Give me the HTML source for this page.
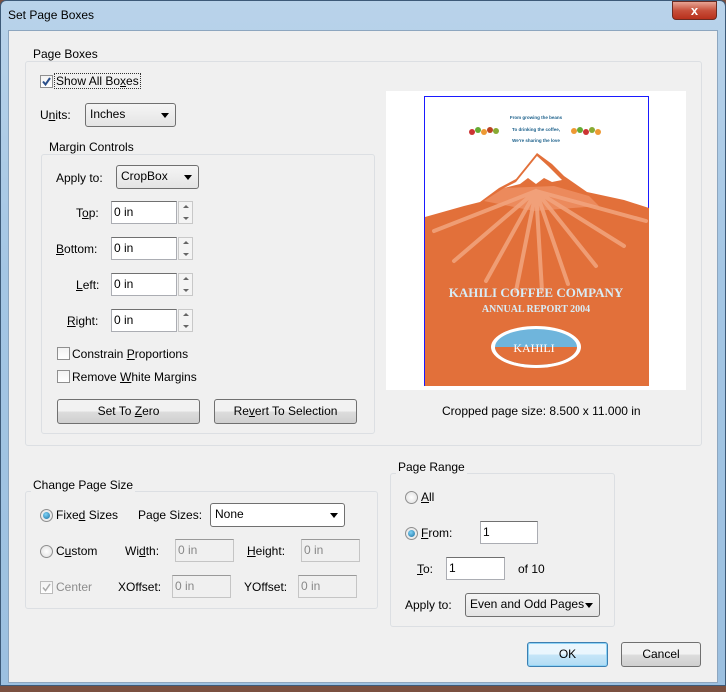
<!DOCTYPE html>
<html><head><style>
*{box-sizing:border-box}
body{margin:0;width:726px;height:692px;overflow:hidden;font-family:"Liberation Sans",sans-serif;font-size:12px;color:#000;background:#7a5040;position:relative}
.a{position:absolute}
#frame{left:0;top:0;width:726px;height:686px;background:linear-gradient(#b9d3ea,#a4c6e4 40%,#9cc0e0);border:1px solid #3d5a78;border-radius:6px 6px 0 0}
#inner{left:8px;top:30px;width:710px;height:653px;background:#f0f0f0;border:1px solid #8da6bf}
.grp{position:absolute;border:1px solid #dcdfe3;border-radius:3px}
.lbl{position:absolute;background:#f0f0f0;padding:0 2px;line-height:14px}
.t{position:absolute;line-height:14px;white-space:nowrap}
.sel{position:absolute;border:1px solid #707070;border-radius:3px;background:linear-gradient(#f5f5f5,#e4e4e4);padding:3px 4px;line-height:15px}
.sel:after{content:"";position:absolute;right:6px;top:9px;border:4px solid transparent;border-top:5px solid #000;border-bottom:0}
.sel.w{background:#fff}
.inp{position:absolute;border:1px solid #abadb3;border-top-color:#707070;background:#fff;padding:2px 2px;line-height:16px}
.inp.d{background:#f0f0f0;color:#888;border-color:#c5c5c5;border-top-color:#999}
.spin{position:absolute;width:15px;height:23px;border:1px solid #c8c8c8;background:#f4f4f4}
.spin:before,.spin:after{content:"";position:absolute;left:4px;border:3px solid transparent}
.spin:before{top:3px;border-bottom:3px solid #666;border-top:0}
.spin:after{bottom:3px;border-top:3px solid #666;border-bottom:0}
.cb{position:absolute;width:13px;height:13px;border:1px solid #8f8f8f;background:linear-gradient(#f2f2f2,#fff)}
.rd{position:absolute;width:13px;height:13px;border:1px solid #8f8f8f;border-radius:50%;background:radial-gradient(#fff,#ddd)}
.rd.on:after{content:"";position:absolute;left:2px;top:2px;width:7px;height:7px;border-radius:50%;background:radial-gradient(circle at 40% 35%,#7fd3f7,#1a6fa0)}
.btn{position:absolute;border:1px solid #707070;border-radius:3px;background:linear-gradient(#f2f2f2 50%,#dddddd 50%,#cfcfcf);text-align:center;line-height:22px}
u{text-decoration:underline}
</style></head><body>
<div id="frame" class="a"></div>
<div class="t" style="left:8px;top:8px;font-size:12px">Set Page Boxes</div>
<div class="a" style="left:672px;top:1px;width:45px;height:19px;border:1px solid #6b2b22;border-radius:0 0 4px 4px;background:linear-gradient(#e8a494,#c7503b 50%,#b8301c);color:#fff;text-align:center;font-weight:bold;font-size:13px;line-height:17px">x</div>
<div id="inner" class="a"></div>

<div class="grp" style="left:25px;top:61px;width:677px;height:385px"></div>
<div class="lbl" style="left:31px;top:47px">Page Boxes</div>
<div class="cb" style="left:40px;top:75px"><svg width="11" height="11" style="position:absolute;left:0;top:0"><path d="M2 5.5 L4.5 8.5 L9 2" stroke="#2a4f8a" stroke-width="2" fill="none"/></svg></div>
<div class="t" style="left:55px;top:74px;outline:1px dotted #333;padding:0 1px">Show All Bo<u>x</u>es</div>
<div class="t" style="left:40px;top:108px">U<u>n</u>its:</div>
<div class="sel" style="left:85px;top:103px;width:91px;height:24px">Inches</div>

<div class="grp" style="left:41px;top:154px;width:334px;height:280px"></div>
<div class="lbl" style="left:47px;top:140px">Margin Controls</div>
<div class="t" style="left:56px;top:171px">Apply to:</div>
<div class="sel" style="left:116px;top:165px;width:83px;height:24px">CropBox</div>
<div class="t" style="left:76px;top:206px">T<u>o</u>p:</div>
<div class="inp" style="left:111px;top:201px;width:66px;height:23px">0 in</div><div class="spin" style="left:178px;top:201px"></div>
<div class="t" style="left:56px;top:242px"><u>B</u>ottom:</div>
<div class="inp" style="left:111px;top:237px;width:66px;height:23px">0 in</div><div class="spin" style="left:178px;top:237px"></div>
<div class="t" style="left:76px;top:278px"><u>L</u>eft:</div>
<div class="inp" style="left:111px;top:273px;width:66px;height:23px">0 in</div><div class="spin" style="left:178px;top:273px"></div>
<div class="t" style="left:67px;top:314px"><u>R</u>ight:</div>
<div class="inp" style="left:111px;top:309px;width:66px;height:23px">0 in</div><div class="spin" style="left:178px;top:309px"></div>
<div class="cb" style="left:57px;top:347px"></div><div class="t" style="left:72px;top:347px">Constrain <u>P</u>roportions</div>
<div class="cb" style="left:57px;top:370px"></div><div class="t" style="left:72px;top:370px">Remove <u>W</u>hite Margins</div>
<div class="btn" style="left:57px;top:399px;width:143px;height:25px">Set To <u>Z</u>ero</div>
<div class="btn" style="left:214px;top:399px;width:143px;height:25px">Re<u>v</u>ert To Selection</div>

<div class="a" style="left:386px;top:91px;width:300px;height:299px;background:#fff"></div>
<svg class="a" style="left:424px;top:96px" width="226" height="291" viewBox="0 0 226 291">
<rect x="0.5" y="0.5" width="224" height="289" fill="#fff" stroke="#1a1aff"/>
<path d="M1 121 L40 110 L56 106 L75 92 L92 83 L113 57 L128 68 L140 80 L163 96 L200 104 L225 112 L225 290 L1 290 Z" fill="#e2703a"/>
<path d="M80 92 L92 86 L113 60 L124 70 L138 84 L128 86 L120 82 L112 88 L104 82 L96 88 Z" fill="#fff"/>
<path d="M60 105 L80 92 L130 90 L165 100 L175 110 L110 115 Z" fill="#ec8a5c"/>
<g stroke="#f2a57f" stroke-width="4" opacity=".85" stroke-linecap="round">
<path d="M112 95 L10 135 M112 95 L30 165 M112 95 L62 185 M112 95 L92 195 M112 95 L118 195 M112 95 L144 188 M112 95 L172 170 M112 95 L200 150 M112 95 L222 125"/>
</g>
<text x="112" y="23" font-size="4.5" fill="#1a5f8a" text-anchor="middle" font-weight="bold">From growing the beans</text>
<text x="112" y="35" font-size="4.5" fill="#1a5f8a" text-anchor="middle" font-weight="bold">To drinking the coffee,</text>
<text x="112" y="46" font-size="4.5" fill="#1a5f8a" text-anchor="middle" font-weight="bold">We're sharing the love</text>
<g><circle cx="48" cy="36" r="3" fill="#c33"/><circle cx="54" cy="34" r="3" fill="#6a3"/><circle cx="60" cy="36" r="3" fill="#e93"/><circle cx="66" cy="34" r="3" fill="#b42"/><circle cx="72" cy="35" r="3" fill="#8a3"/>
<circle cx="150" cy="35" r="3" fill="#e93"/><circle cx="156" cy="34" r="3" fill="#6a3"/><circle cx="162" cy="36" r="3" fill="#c33"/><circle cx="168" cy="34" r="3" fill="#8a3"/><circle cx="174" cy="36" r="3" fill="#e93"/></g>
<text x="112" y="201" font-size="13" fill="#d8ecf6" text-anchor="middle" font-family="Liberation Serif" font-weight="bold">KAHILI COFFEE COMPANY</text>
<text x="112" y="216" font-size="10" fill="#d8ecf6" text-anchor="middle" font-family="Liberation Serif" font-weight="bold">ANNUAL REPORT 2004</text>
<ellipse cx="112" cy="251" rx="45" ry="21" fill="#fff"/><ellipse cx="112" cy="251" rx="41" ry="18" fill="#6fb5dc"/>
<path d="M71 251 L153 251 A41 18 0 0 1 71 251Z" fill="#e2703a"/>
<text x="110" y="256" font-size="12" fill="#fff" text-anchor="middle" font-family="Liberation Serif">KAHILI</text>
</svg>
<div class="t" style="left:442px;top:404px">Cropped page size: 8.500 x 11.000 in</div>

<div class="grp" style="left:25px;top:491px;width:353px;height:118px"></div>
<div class="lbl" style="left:31px;top:478px">Change Page Size</div>
<div class="rd on" style="left:40px;top:509px"></div><div class="t" style="left:56px;top:508px">Fixe<u>d</u> Sizes</div>
<div class="t" style="left:138px;top:508px">Pa<u>g</u>e Sizes:</div>
<div class="sel w" style="left:210px;top:503px;width:135px;height:24px">None</div>
<div class="rd" style="left:40px;top:545px"></div><div class="t" style="left:56px;top:544px">C<u>u</u>stom</div>
<div class="t" style="left:125px;top:544px">Wi<u>d</u>th:</div>
<div class="inp d" style="left:175px;top:539px;width:59px;height:23px">0 in</div>
<div class="t" style="left:247px;top:544px"><u>H</u>eight:</div>
<div class="inp d" style="left:301px;top:539px;width:59px;height:23px">0 in</div>
<div class="cb" style="left:40px;top:581px;border-color:#bbb"><svg width="11" height="11" style="position:absolute"><path d="M2 5.5 L4.5 8.5 L9 2" stroke="#aaa" stroke-width="1.5" fill="none"/></svg></div>
<div class="t" style="left:56px;top:580px;color:#8d8d8d">Center</div>
<div class="t" style="left:118px;top:580px">XOffset:</div>
<div class="inp d" style="left:172px;top:575px;width:59px;height:23px">0 in</div>
<div class="t" style="left:244px;top:580px">YOffset:</div>
<div class="inp d" style="left:298px;top:575px;width:59px;height:23px">0 in</div>

<div class="grp" style="left:390px;top:473px;width:225px;height:154px"></div>
<div class="lbl" style="left:396px;top:460px">Page Range</div>
<div class="rd" style="left:405px;top:491px"></div><div class="t" style="left:421px;top:490px"><u>A</u>ll</div>
<div class="rd on" style="left:405px;top:527px"></div><div class="t" style="left:421px;top:526px"><u>F</u>rom:</div>
<div class="inp" style="left:480px;top:521px;width:58px;height:23px">1</div>
<div class="t" style="left:417px;top:562px"><u>T</u>o:</div>
<div class="inp" style="left:446px;top:557px;width:59px;height:23px">1</div>
<div class="t" style="left:518px;top:562px">of 10</div>
<div class="t" style="left:405px;top:598px">Apply to:</div>
<div class="sel" style="left:465px;top:593px;width:135px;height:24px;padding-right:14px">Even and Odd Pages</div>

<div class="btn" style="left:527px;top:642px;width:81px;height:25px;border-color:#3c7fb1;box-shadow:inset 0 0 0 1px #8ed3f6;background:linear-gradient(#eaf6fd 50%,#c6e6f8 50%,#b2dcf4)">OK</div>
<div class="btn" style="left:621px;top:642px;width:80px;height:25px">Cancel</div>
</body></html>
